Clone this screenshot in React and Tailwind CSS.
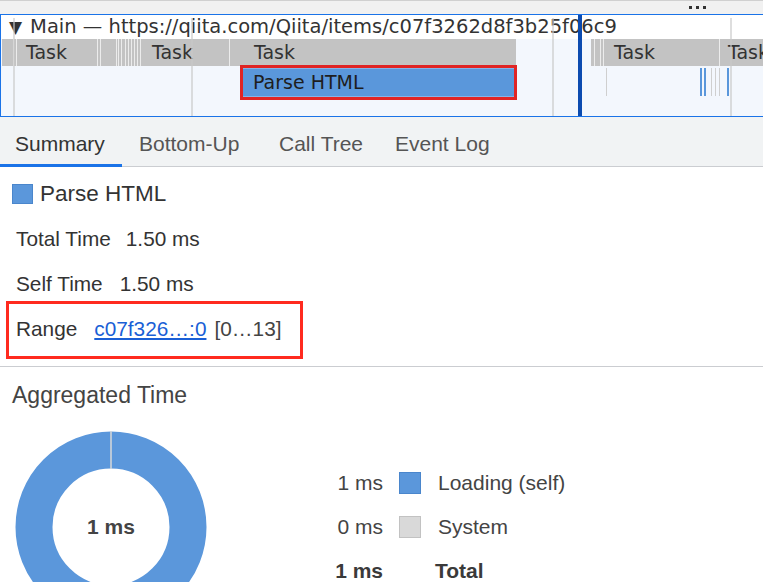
export default function App() {
  const whiteLines = [12, 15, 96, 99, 115, 117, 120, 124, 127, 130, 133, 136, 139, 228, 593, 599, 602, 718];
  const events = [
    { x: 605, c: "bg-[#cfcfcf]", w: "w-[1px]" },
    { x: 699, c: "bg-[#5a97db]", w: "w-[2px]" },
    { x: 703, c: "bg-[#5a97db]", w: "w-[2px]" },
    { x: 710, c: "bg-[#cfcfcf]", w: "w-[1px]" },
    { x: 714, c: "bg-[#cfcfcf]", w: "w-[1px]" },
    { x: 718, c: "bg-[#cfcfcf]", w: "w-[1px]" },
    { x: 726, c: "bg-[#5a97db]", w: "w-[2px]" },
  ];
  const overlay = [13, 191, 552, 730];
  return (
    <div className="w-[763px] h-[582px] overflow-hidden bg-white font-['Liberation_Sans',Arial,sans-serif] text-[#333]">
      {/* top strip */}
      <div className="h-[14px] bg-[#f1f1f1] border-t border-[#d0d0d0] flex justify-end items-center pr-[57px]">
        <div className="flex gap-[4px]">
          <div className="w-[3px] h-[3px] bg-[#333]" />
          <div className="w-[3px] h-[3px] bg-[#333]" />
          <div className="w-[3px] h-[3px] bg-[#333]" />
        </div>
      </div>

      {/* timeline */}
      <div className="relative border-y border-l border-[#1a73e8] font-['DejaVu_Sans',sans-serif] text-[19px] text-[#333]">
        <div className="h-[24px] bg-white flex items-center pl-[8px] whitespace-nowrap overflow-hidden text-[19.5px]">
          <span className="text-[17px] mr-[8px] leading-none">▼</span>
          <span>Main — https://qiita.com/Qiita/items/c07f3262d8f3b25f06c9</span>
        </div>
        <div className="relative h-[27px] bg-[#f3f7fd] overflow-hidden">
          <div className="absolute top-0 bottom-0 left-[1px] w-[514px] bg-[#c3c3c3]" />
          <div className="absolute top-0 bottom-0 left-[590px] w-[180px] bg-[#c3c3c3]" />
          {whiteLines.map((x) => (
            <div key={x} className="absolute top-0 bottom-0 w-[1px] bg-[#ececec]" style={{ left: x }} />
          ))}
          <span className="absolute left-[25px] top-0 h-full flex items-center">Task</span>
          <span className="absolute left-[151px] top-0 h-full flex items-center">Task</span>
          <span className="absolute left-[253px] top-0 h-full flex items-center">Task</span>
          <span className="absolute left-[613px] top-0 h-full flex items-center">Task</span>
          <span className="absolute left-[727px] top-0 h-full flex items-center">Task</span>
        </div>
        <div className="relative h-[50px] bg-[#f3f7fd]">
          <div className="absolute left-[241px] top-[2px] w-[273px] h-[29px] bg-[#5a97db] border border-[#86b3e6] flex items-center pl-[10px] text-[#1e1e1e]">
            Parse HTML
          </div>
          <div className="absolute left-[239px] top-[-1px] w-[277px] h-[35px] border-[3px] border-[#e02424] z-10" />
          {events.map((e) => (
            <div key={e.x} className={`absolute top-[2px] h-[28px] ${e.c} ${e.w}`} style={{ left: e.x }} />
          ))}
        </div>
        {overlay.map((x) => (
          <div key={x} className="absolute top-[3px] bottom-0 w-[2px] bg-[#c8c8c8]/60 z-20" style={{ left: x - 1 }} />
        ))}
        <div className="absolute top-0 bottom-0 left-[577px] w-[4px] bg-[#0b4bb0] z-30" />
      </div>

      {/* tabs */}
      <div className="h-[50px] bg-[#f1f3f4] border-b border-[#cbcdd1] flex text-[21px] pt-[4px]">
        <div className="relative w-[122px] pl-[15px] flex items-center text-[#333]">
          Summary
          <div className="absolute left-0 right-0 bottom-[-1px] h-[3px] bg-[#1a73e8]" />
        </div>
        <div className="w-[139px] pl-[17px] flex items-center text-[#555]">Bottom-Up</div>
        <div className="w-[116px] pl-[18px] flex items-center text-[#555]">Call Tree</div>
        <div className="pl-[18px] flex items-center text-[#555]">Event Log</div>
      </div>

      {/* details */}
      <div className="pt-[4px] pb-[15px] border-b border-[#cbcdd1] text-[20.8px] text-[#333]">
        <div className="h-[45px] flex items-center pl-[12px]">
          <span className="w-[21px] h-[20px] bg-[#5b97db] border border-[#4a86cc]" />
          <span className="ml-[7px] text-[22.5px]">Parse HTML</span>
        </div>
        <div className="h-[45px] flex items-center pl-[16px]">
          <span>Total Time</span>
          <span className="ml-[15px]">1.50 ms</span>
        </div>
        <div className="h-[45px] flex items-center pl-[16px]">
          <span>Self Time</span>
          <span className="ml-[17px]">1.50 ms</span>
        </div>
        <div className="relative h-[45px] flex items-center pl-[16px]">
          <span>Range</span>
          <span className="ml-[17px] text-[#1a5fd6] underline">c07f326…:0</span>
          <span className="ml-[8px] text-[#444]">[0…13]</span>
          <div className="absolute left-[6px] top-[-5px] w-[297px] h-[58px] border-[3px] border-[#ff2a1f]" />
        </div>
      </div>

      {/* aggregated */}
      <div className="pt-[15px] pl-[12px] text-[23px] leading-[26px] text-[#444]">Aggregated Time</div>
      <div className="flex mt-[23px]">
        <div className="relative ml-[15px] w-[192px] h-[192px] shrink-0">
          <svg width="192" height="192" viewBox="0 0 192 192">
            <circle cx="96" cy="96" r="77" fill="none" stroke="#5b97db" strokeWidth="37" />
            <line x1="96" y1="0" x2="96" y2="38" stroke="#d8d8d8" strokeWidth="1.5" />
          </svg>
          <div className="absolute inset-0 flex items-center justify-center font-bold text-[21px] text-[#444]">1 ms</div>
        </div>
        <div className="ml-[116px] flex flex-col justify-center text-[21px] text-[#444]">
          <div className="h-[44px] flex items-center">
            <span className="w-[60px] text-right">1 ms</span>
            <span className="ml-[16px] w-[22px] h-[22px] bg-[#5b97db] border border-[#4a86cc]" />
            <span className="ml-[17px]">Loading (self)</span>
          </div>
          <div className="h-[44px] flex items-center">
            <span className="w-[60px] text-right">0 ms</span>
            <span className="ml-[16px] w-[22px] h-[22px] bg-[#d9d9d9] border border-[#c2c2c2]" />
            <span className="ml-[17px]">System</span>
          </div>
          <div className="h-[44px] flex items-center font-bold text-[#3a3a3a]">
            <span className="w-[60px] text-right">1 ms</span>
            <span className="ml-[52px]">Total</span>
          </div>
        </div>
      </div>
    </div>
  );
}
